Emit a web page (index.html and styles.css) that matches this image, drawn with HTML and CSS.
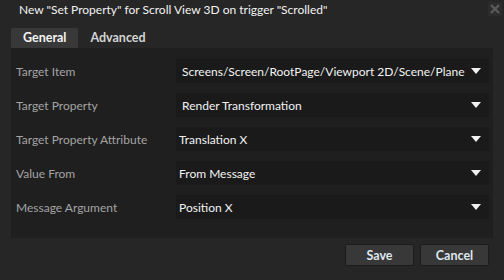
FILE: index.html
```html
<!DOCTYPE html>
<html lang="en">
<head>
  <meta charset="UTF-8">
  <title>New Set Property</title>
  <link rel="stylesheet" href="styles.css">
</head>
<body>
  <div class="dialog">
    <div class="title-bar">
      <span class="title">New "Set Property" for Scroll View 3D on trigger "Scrolled"</span>
      <span class="close">
        <svg width="10" height="10" viewBox="0 0 10 10"><path d="M1 1 L9 9 M9 1 L1 9" stroke="#5a5a5a" stroke-width="2.4"/></svg>
      </span>
    </div>

    <div class="tabs">
      <div class="tab active">General</div>
      <div class="tab">Advanced</div>
    </div>

    <div class="panel">
      <div class="row">
        <label>Target Item</label>
        <div class="field"><span>Screens/Screen/RootPage/Viewport 2D/Scene/Plane</span><i class="arrow"></i></div>
      </div>
      <div class="row">
        <label>Target Property</label>
        <div class="field"><span>Render Transformation</span><i class="arrow"></i></div>
      </div>
      <div class="row">
        <label>Target Property Attribute</label>
        <div class="field tight"><span>Translation X</span><i class="arrow"></i></div>
      </div>
      <div class="row">
        <label>Value From</label>
        <div class="field tight"><span>From Message</span><i class="arrow"></i></div>
      </div>
      <div class="row">
        <label>Message Argument</label>
        <div class="field tight"><span>Position X</span><i class="arrow"></i></div>
      </div>
    </div>

    <div class="buttons">
      <button>Save</button>
      <button>Cancel</button>
    </div>
  </div>
</body>
</html>
```

FILE: styles.css
```css
body {
  margin: 0;
  background: #262626;
  font-family: Lato, "Open Sans", sans-serif;
  font-size: 12px;
  color: #e8e8e8;
}
.dialog {
  width: 504px;
  height: 280px;
  box-sizing: border-box;
}
.title-bar {
  height: 26px;
  display: flex;
  align-items: flex-start;
  justify-content: space-between;
  padding: 0 2px 0 19px;
}
.title {
  font-size: 12px;
  line-height: 20px;
  color: #f2f2f2;
  white-space: nowrap;
}
.close {
  width: 14px;
  height: 14px;
  margin-top: 2px;
  background: #2c2c2c;
  display: flex;
  align-items: center;
  justify-content: center;
}
.tabs {
  display: flex;
  margin: 2px 0 0 11px;
  height: 20px;
}
.tab {
  font-weight: bold;
  font-size: 12.5px;
  line-height: 20px;
  padding: 0 12px;
  color: #d4d4d4;
  border-radius: 2px 2px 0 0;
}
.tab.active {
  background: #383838;
  color: #f4f4f4;
}
.panel {
  margin: 0 11px;
  height: 190px;
  background: #1f1f1f;
  box-sizing: border-box;
  padding-top: 11px;
}
.row {
  display: flex;
  align-items: center;
  height: 24px;
  margin-bottom: 10px;
}
.row label {
  width: 165px;
  padding-left: 5px;
  box-sizing: border-box;
  color: #a4a4a4;
}
.field {
  width: 313px;
  height: 24px;
  background: #1a1a1a;
  display: flex;
  align-items: center;
  justify-content: space-between;
  padding: 0 8px 0 6px;
  box-sizing: border-box;
  color: #f2f2f2;
  white-space: nowrap;
}
.field.tight {
  padding-left: 3px;
}
.arrow {
  flex-shrink: 0;
  width: 0;
  height: 0;
  border-left: 5px solid transparent;
  border-right: 5px solid transparent;
  border-top: 6px solid #f0f0f0;
}
.buttons {
  display: flex;
  justify-content: flex-end;
  gap: 6px;
  padding: 6px 15px 0 0;
}
button {
  width: 69px;
  height: 22px;
  background: #383838;
  border: 1px solid #1c1c1c;
  border-radius: 2px;
  color: #dfe6ee;
  font-family: inherit;
  font-size: 12.5px;
  font-weight: bold;
  padding: 0;
}
```
